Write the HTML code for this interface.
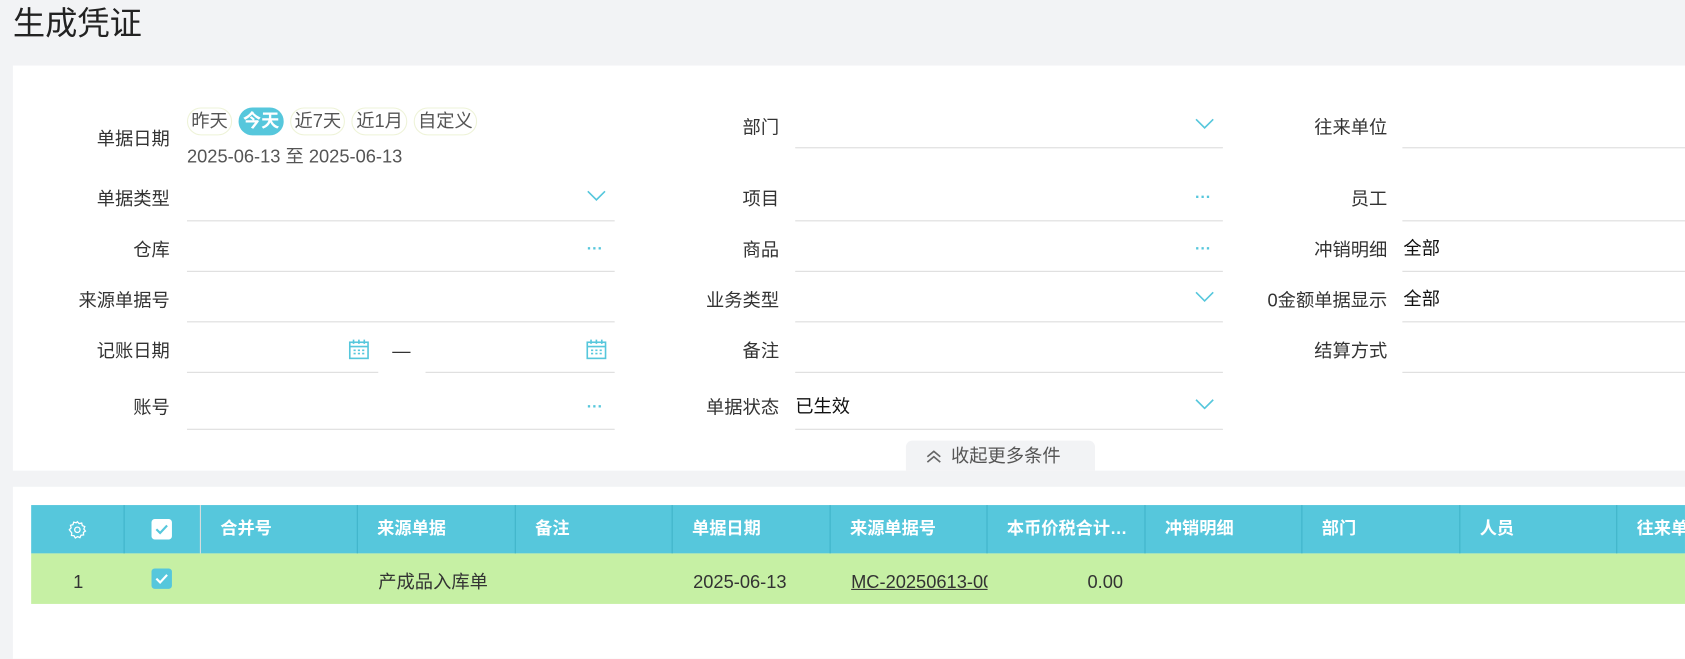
<!DOCTYPE html>
<html><head><meta charset="utf-8"><style>
*{margin:0;padding:0;box-sizing:border-box}
html,body{width:1685px;height:657px;overflow:hidden;background:#f2f3f5}
#w{position:absolute;left:0;top:0;width:1568px;height:612px;transform:scale(1.0746);transform-origin:0 0;font-family:"Liberation Sans","Noto Sans CJK SC",sans-serif;color:#333;font-size:17px;line-height:20px}
.a{position:absolute}
.lbl{position:absolute;text-align:right;white-space:nowrap;font-size:17px;color:#333}
.ln{position:absolute;height:1px;background:#dcdcdc}
.val{position:absolute;font-size:17px;color:#111}
.chev{position:absolute;width:18px;height:10px}
.dots{position:absolute;color:#56c7dc;font-size:15px;font-weight:bold;letter-spacing:0px}
.th{position:absolute;top:470px;height:45px;line-height:45px;color:#fff;font-weight:bold;font-size:16px;border-right:1px solid #3fb3c9;padding-left:18px}
.chip{display:inline-block;height:26px;line-height:24px;border:1px solid #eef3d8;border-radius:13px;padding:0 3px;margin-right:6px;color:#555;font-size:17px}
</style></head><body><div id="w">
<div class="a" style="left:12px;top:6px;font-size:30px;line-height:34px;color:#222">生成凭证</div>
<div class="a" style="left:12px;top:61px;width:1556px;height:377px;background:#fff"></div>
<div class="a" style="left:12px;top:453px;width:1556px;height:160px;background:#fff"></div>

<div class="lbl" style="right:1410px;top:120px">单据日期</div>
<div class="a" style="left:174px;top:100px"><span class="chip">昨天</span><span class="chip" style="background:#56c7dc;color:#fff;font-weight:bold;border-color:#56c7dc">今天</span><span class="chip">近7天</span><span class="chip">近1月</span><span class="chip">自定义</span></div>
<div class="a" style="left:174px;top:136px;color:#555;font-size:17px">2025-06-13 至 2025-06-13</div>
<div class="lbl" style="right:1410px;top:176px">单据类型</div>
<div class="ln" style="left:174px;top:205px;width:398px"></div>
<svg class="chev" style="left:546px;top:177px" viewBox="0 0 18 10"><path d="M1 1 L9 9 L17 1" fill="none" stroke="#56c7dc" stroke-width="1.5"/></svg>
<div class="lbl" style="right:1410px;top:223px">仓库</div>
<div class="ln" style="left:174px;top:252px;width:398px"></div>
<div class="dots" style="left:546px;top:222px">···</div>
<div class="lbl" style="right:1410px;top:270px">来源单据号</div>
<div class="ln" style="left:174px;top:299px;width:398px"></div>
<div class="lbl" style="right:1410px;top:317px">记账日期</div>
<div class="ln" style="left:174px;top:346px;width:178px"></div>
<div class="ln" style="left:396px;top:346px;width:176px"></div>
<div class="a" style="left:365px;top:317px">—</div>
<svg class="a" style="left:324px;top:315px" width="20" height="20" viewBox="0 0 20 20"><rect x="1.5" y="3.5" width="17" height="15" fill="none" stroke="#56c7dc" stroke-width="1.5"/><path d="M1.5 7.5H18.5M5 1v4M10 1v4M15 1v4" stroke="#56c7dc" stroke-width="1.5"/><path d="M5 11h2M9 11h2M13 11h2M5 14h2M9 14h2M13 14h2" stroke="#56c7dc" stroke-width="1.5"/></svg>
<svg class="a" style="left:545px;top:315px" width="20" height="20" viewBox="0 0 20 20"><rect x="1.5" y="3.5" width="17" height="15" fill="none" stroke="#56c7dc" stroke-width="1.5"/><path d="M1.5 7.5H18.5M5 1v4M10 1v4M15 1v4" stroke="#56c7dc" stroke-width="1.5"/><path d="M5 11h2M9 11h2M13 11h2M5 14h2M9 14h2M13 14h2" stroke="#56c7dc" stroke-width="1.5"/></svg>
<div class="lbl" style="right:1410px;top:370px">账号</div>
<div class="ln" style="left:174px;top:399px;width:398px"></div>
<div class="dots" style="left:546px;top:369px">···</div>

<div class="lbl" style="right:843px;top:109px">部门</div>
<div class="ln" style="left:740px;top:137px;width:398px"></div>
<svg class="chev" style="left:1112px;top:110px" viewBox="0 0 18 10"><path d="M1 1 L9 9 L17 1" fill="none" stroke="#56c7dc" stroke-width="1.5"/></svg>
<div class="lbl" style="right:843px;top:176px">项目</div>
<div class="ln" style="left:740px;top:205px;width:398px"></div>
<div class="dots" style="left:1112px;top:174px">···</div>
<div class="lbl" style="right:843px;top:223px">商品</div>
<div class="ln" style="left:740px;top:252px;width:398px"></div>
<div class="dots" style="left:1112px;top:222px">···</div>
<div class="lbl" style="right:843px;top:270px">业务类型</div>
<div class="ln" style="left:740px;top:299px;width:398px"></div>
<svg class="chev" style="left:1112px;top:271px" viewBox="0 0 18 10"><path d="M1 1 L9 9 L17 1" fill="none" stroke="#56c7dc" stroke-width="1.5"/></svg>
<div class="lbl" style="right:843px;top:317px">备注</div>
<div class="ln" style="left:740px;top:346px;width:398px"></div>
<div class="lbl" style="right:843px;top:370px">单据状态</div>
<div class="val" style="left:740px;top:369px">已生效</div>
<div class="ln" style="left:740px;top:399px;width:398px"></div>
<svg class="chev" style="left:1112px;top:371px" viewBox="0 0 18 10"><path d="M1 1 L9 9 L17 1" fill="none" stroke="#56c7dc" stroke-width="1.5"/></svg>
<div class="a" style="left:843px;top:410px;width:176px;height:28px;background:#f2f3f5;border-radius:6px 6px 0 0;color:#555;font-size:17px;line-height:30px;padding-left:18px"><svg width="16" height="12" viewBox="0 0 16 12" style="vertical-align:-1px;margin-right:8px"><path d="M2 6L8 1L14 6M2 11L8 6L14 11" fill="none" stroke="#666" stroke-width="1.5"/></svg>收起更多条件</div>

<div class="lbl" style="right:277px;top:109px">往来单位</div>
<div class="ln" style="left:1305px;top:137px;width:263px"></div>
<div class="lbl" style="right:277px;top:176px">员工</div>
<div class="ln" style="left:1305px;top:205px;width:263px"></div>
<div class="lbl" style="right:277px;top:223px">冲销明细</div>
<div class="val" style="left:1306px;top:222px">全部</div>
<div class="ln" style="left:1305px;top:252px;width:263px"></div>
<div class="lbl" style="right:277px;top:270px">0金额单据显示</div>
<div class="val" style="left:1306px;top:269px">全部</div>
<div class="ln" style="left:1305px;top:299px;width:263px"></div>
<div class="lbl" style="right:277px;top:317px">结算方式</div>
<div class="ln" style="left:1305px;top:346px;width:263px"></div>

<div class="a" style="left:29px;top:470px;width:1539px;height:45px;background:#56c7dc"></div>
<div class="a" style="left:29px;top:515px;width:1539px;height:47px;background:#c6f0a4"></div>
<div class="th" style="left:29px;width:87px"></div>
<svg class="a" style="left:63px;top:484px" width="18" height="18" viewBox="0 0 18 18"><path d="M9 1.5l1.6 1.8 2.4-.6.6 2.4 2.3.9-.9 2.3 1.5 1.9-1.9 1.2.2 2.4-2.4.3-1 2.2-2.2-1-2.1 1.3-1.2-2.1-2.4-.2.3-2.4L1.5 9l1.7-1.8-.6-2.3 2.3-.7.7-2.3 2.3.6z" fill="none" stroke="#fff" stroke-width="1.2"/><circle cx="9" cy="9" r="2.5" fill="none" stroke="#fff" stroke-width="1.2"/></svg>
<div class="th" style="left:116px;width:71px;border-right:1px solid #ddd"></div>
<div class="a" style="left:141px;top:483px;width:19px;height:19px;background:#fff;border-radius:3px"><svg width="19" height="19" viewBox="0 0 19 19"><path d="M4.5 9.5l3.5 3.5 6.5-7" fill="none" stroke="#56c7dc" stroke-width="2"/></svg></div>
<div class="th" style="left:187px;width:146px">合并号</div>
<div class="th" style="left:333px;width:147px">来源单据</div>
<div class="th" style="left:480px;width:146px">备注</div>
<div class="th" style="left:626px;width:147px">单据日期</div>
<div class="th" style="left:773px;width:146px">来源单据号</div>
<div class="th" style="left:919px;width:147px">本币价税合计…</div>
<div class="th" style="left:1066px;width:146px">冲销明细</div>
<div class="th" style="left:1212px;width:147px">部门</div>
<div class="th" style="left:1359px;width:146px">人员</div>
<div class="th" style="left:1505px;width:63px;border:none;white-space:nowrap;overflow:hidden">往来单位</div>
<div class="a" style="left:68px;top:532px">1</div>
<div class="a" style="left:141px;top:529px;width:19px;height:19px;background:#56c7dc;border-radius:3px"><svg width="19" height="19" viewBox="0 0 19 19"><path d="M4.5 9.5l3.5 3.5 6.5-7" fill="none" stroke="#fff" stroke-width="2"/></svg></div>
<div class="a" style="left:352px;top:532px">产成品入库单</div>
<div class="a" style="left:645px;top:532px">2025-06-13</div>
<div class="a" style="left:792px;top:532px;width:127px;overflow:hidden;white-space:nowrap;text-decoration:underline">MC-20250613-001</div>
<div class="a" style="left:1012px;top:532px">0.00</div>
</div></body></html>
